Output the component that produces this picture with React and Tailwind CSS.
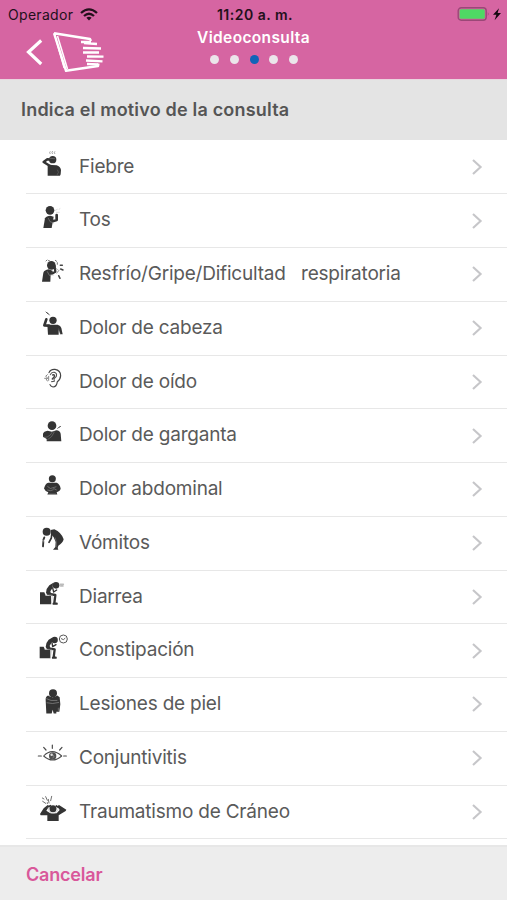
import React from "react";

const DARK = "#343434";

const line = (d, w = 6, color = DARK) => (
  <path d={d} fill="none" stroke={color} strokeWidth={w} strokeLinecap="round" strokeLinejoin="round" />
);

// Pictograms are drawn at three units per pixel; `top` is the row's first unit.
const rows = [
  {
    label: "Fiebre",
    top: 0,
    art: (
      <>
        {line("M90 41 q-3 -3 0 -6 M97 41 q-3 -4 0 -7 M104 41 q-3 -3 0 -6", 2.8, "#999")}
        <circle cx="98" cy="59" r="11" />
        {line("M99 59 L82 58 L71 66 L90 78", 7.5)}
        {line("M90 55 L104 56", 1.5, "#888")}
        <path d="M83 77 Q88 73 96 75 L110 76 Q121 79 123 90 L122 103 L120 107 H83 Z" />
        {line("M113 90 Q119 97 112 104", 1.5, "#777")}
      </>
    ),
  },
  {
    label: "Tos",
    top: 161,
    art: (
      <>
        <circle cx="90" cy="210" r="13" />
        <path d="M70 263 L75 234 Q79 226 91 226 L101 229 L95 263 Z" />
        {line("M88 239 L98 243 L110 239 L110 224", 8)}
        {line("M85 234 L90 244 L101 248", 1.5, "#999")}
        {line("M106 210 l6 -3 M109 216 h9 M117 207 l3 -2", 3, "#ddd")}
      </>
    ),
  },
  {
    label: "Resfrío/Gripe/Dificultad\u00a0\u00a0 respiratoria",
    top: 322,
    art: (
      <>
        <circle cx="94" cy="374" r="13" />
        <path d="M66 423 L70 396 Q73 388 86 386 L99 391 L92 401 L91 423 Z" />
        {line("M86 397 L95 399 L106 393 L104 377", 7)}
        {line("M82 393 L88 404 L101 403", 1.5, "#aaa")}
        {line("M78 361 l3 -3 M106 359 l4 3 M85 360 h3 M112 366 v5", 3, "#777")}
        {line("M108 383 l8 6 l-6 9 M118 389 l-6 6", 2, "#999")}
        {line("M121 374 h6 M122 385 l7 3 M116 405 l4 8", 4.5, "#444")}
      </>
    ),
  },
  {
    label: "Dolor de cabeza",
    top: 4,
    art: (
      <>
        {line("M78 37 l5 5 l-1 -3 l6 7", 2.6, "#444")}
        <circle cx="99" cy="62" r="11" />
        {line("M87 78 L73 77 L79 59", 8)}
        <path d="M82 75 H113 Q122 77 124 85 L128 104 H121 L116 91 V105 H84 Z" />
        {line("M116 88 L121 104", 1, "#999")}
      </>
    ),
  },
  {
    label: "Dolor de oído",
    top: 165,
    art: (
      <>
        {line("M87 218 Q91 207 105 208 Q122 211 122 227 Q121 239 112 245 Q110 261 99 261 Q92 260 90 254", 3.5, "#444")}
        {line("M91 224 Q94 216 103 217 Q112 220 109 229 L102 237 L103 244 L95 245", 3.3, "#555")}
        {line("M98 225 Q105 222 103 230 L97 237", 4.5, "#444")}
        {line("M74 235 h9 M82 224 l-5 5 l5 4 M79 238 l3 5 M86 229 v12", 2.7, "#777")}
      </>
    ),
  },
  {
    label: "Dolor de garganta",
    top: 326,
    art: (
      <>
        <circle cx="96" cy="376" r="13" />
        <path d="M69 400 Q71 393 83 391 L96 394 L109 390 Q120 391 122 400 L124 423 H80 V416 L69 409 Z" />
        {line("M72 411 Q82 413 91 404 L98 393 M83 418 Q97 411 103 395", 1.5, "#888")}
        {line("M113 384 l6 -5 M119 381 l3 -3", 3, "#666")}
      </>
    ),
  },
  {
    label: "Dolor abdominal",
    top: 7.5,
    art: (
      <>
        <circle cx="97" cy="55" r="10.5" />
        <path d="M85 67 H110 Q119 70 122 84 Q121 92 110 95 L112 102 H82 L85 95 Q74 91 72 84 Q76 69 85 67 Z" />
        {line("M83 78 L91 84 L108 79 M83 89 Q92 93 100 88 M101 84 l8 4", 1.7, "#999")}
        {line("M87 99 h20", 1, "#777")}
      </>
    ),
  },
  {
    label: "Vómitos",
    top: 169,
    art: (
      <>
        <circle cx="80" cy="216" r="12" />
        <path d="M92 211 L103 209 Q124 218 131 239 Q128 251 115 258 L113 265 L115 270 H99 L106 262 L107 247 L101 233 L93 223 Z" />
        {line("M96 217 L94 235 L87 248", 5)}
        {line("M106 235 Q112 251 109 262", 1.5, "#888")}
        {line("M73 233 L70 241 M70 246 L69 260", 5.5)}
        {line("M70 241 v6", 3, "#777")}
      </>
    ),
  },
  {
    label: "Diarrea",
    top: 330,
    art: (
      <>
        <path d="M60 397 H73 L77 407 H93 V433 H60 Z" />
        <circle cx="108" cy="376" r="10" />
        <path d="M99 369 L88 376 Q78 386 78 398 L82 405 H94 L91 394 L98 383 Z" />
        {line("M98 384 L101 396 L110 390", 4)}
        {line("M88 402 L106 405 L103 429 M101 431 H110", 7)}
        {line("M76 405 H97 L94 432", 1.5, "#999")}
        {line("M121 373 h9 M122 378 h7", 5, "#bbb")}
      </>
    ),
  },
  {
    label: "Constipación",
    top: 11,
    art: (
      <>
        <path d="M59 79 H71 L75 88 H91 V114 H59 Z" />
        <circle cx="104" cy="59" r="9.5" />
        <path d="M96 52 L86 58 Q77 67 77 80 L81 87 H92 L89 76 L96 65 Z" />
        {line("M96 67 L98 79 L108 73", 4)}
        {line("M86 84 L104 87 L101 111 M99 112 H107", 7)}
        {line("M74 87 H95 L91 113", 1.5, "#999")}
        <circle cx="130" cy="56" r="12" fill="none" stroke="#555" strokeWidth="3" />
        {line("M124 55 L130 58 L135 54", 2.8, "#555")}
      </>
    ),
  },
  {
    label: "Lesiones de piel",
    top: 172.5,
    art: (
      <>
        <circle cx="99" cy="218" r="12" />
        <path d="M84 225 Q76 228 77 239 L79 279 H95 L98 268 L101 279 H109 V274 H118 L121 251 L119 230 L112 225 Q98 235 84 225 Z" />
        {line("M80 235 Q91 243 111 240 M81 247 Q97 252 116 246", 1.8, "#999")}
        {line("M115 263 V270", 1.5, "#999")}
      </>
    ),
  },
  {
    label: "Conjuntivitis",
    top: 334,
    art: (
      <>
        {line("M71 409 Q96 383 125 409 Q98 433 71 409 Z", 3.2, "#4a4a4a")}
        <circle cx="98" cy="409" r="11" fill="#505050" />
        <circle cx="95" cy="405" r="3.8" fill="#ddd" />
        {line("M99 405 Q107 408 99 415", 2, "#999")}
        {line("M55 409 H64 M131 409 H139 M97 376 V386 M71 383 L78 391 M126 383 L119 391", 3.6, "#4a4a4a")}
      </>
    ),
  },
  {
    label: "Traumatismo de Cráneo",
    top: 45,
    art: (
      <>
        {line("M67 84 l5 3 M68 94 l9 6 M77 80 l5 11 M85 88 l2 11 M95 79 l-3 13 M82 98 v3", 2.8, "#666")}
        <path d="M83 105 L71 115 L60 132 L62 136 L82 136 V153 H116 V136 L137 123 L139 119 L117 105 L112 109 L119 120 L110 130 H91 L79 122 L88 108 Z" />
        <circle cx="99" cy="116" r="10.5" />
        {line("M85 112 Q84 130 101 130 Q113 128 115 114", 2.3, "#ccc")}
        {line("M91 107 L86 110 M109 108 L115 112", 5)}
      </>
    ),
  },
];

function StatusBar() {
  return (
    <div className="flex h-7 items-center text-[14px] text-[#23101b]">
      <div className="flex flex-1 items-center gap-[7px] pl-2">
        <span className="text-[14px] tracking-[0.3px]">Operador</span>
        <svg width="18" height="13" viewBox="0 0 18 13" fill="none" stroke="currentColor" strokeWidth="2.3">
          <path d="M1 5 Q9 -2.2 17 5" />
          <path d="M4 8 Q9 3.6 14 8" />
          <path d="M9 12.4 L6.4 9.8 Q9 7.8 11.6 9.8 Z" fill="currentColor" stroke="none" />
        </svg>
      </div>
      <span className="text-[14px] font-semibold tracking-[0.5px]">11:20 a. m.</span>
      <div className="flex flex-1 justify-end pr-[5px]">
        <svg width="45" height="15" viewBox="0 0 45 15">
          <rect x="1.2" y=".8" width="28" height="12.4" rx="3" fill="none" stroke="#9a4877" strokeWidth="1.4" />
          <rect x="2.6" y="2.2" width="25.2" height="9.6" rx="1.5" fill="#4fd964" />
          <path d="M30.8 5 q1.8 2 0 4 z" fill="#9a4877" />
          <path d="M42 1.2 L36 7.8 H39.4 L37.6 13.2 L44 6 H40.6 Z" fill="#140810" />
        </svg>
      </div>
    </div>
  );
}

function Header() {
  return (
    <header className="h-[79px] bg-[#d665a2]">
      <StatusBar />
      <div className="grid grid-cols-3">
        <svg width="110" height="50" viewBox="0 28 110 50" fill="none" stroke="#fff">
          <path d="M41.2 40.5 L28.5 52 L41.2 64" strokeWidth="3.2" />
          <path d="M54 33.2 L66 70.8 L98 66 L98.5 63.6 M54 33.2 L90 39 L91 41" strokeWidth="2.4" strokeLinejoin="round" />
          <path d="M57.5 36 L67.5 69" strokeWidth="1.5" />
          <path d="M55 36 L64 68" strokeWidth="1.2" />
          <path d="M81 42 H91 M84 43 L97 44 M83 48 L101 48.5 M83 52.5 H99 M87 56.5 L103.5 56.6 M86 60.5 L102.5 61.4 M87 64 L98 64.4" strokeWidth="2.3" />
        </svg>
        <div className="flex flex-col items-center">
          <h1 className="h-5 text-[15.5px] leading-5 font-semibold tracking-[0.35px] text-white">Videoconsulta</h1>
          <div className="mt-[7px] ml-px flex gap-[10.6px]">
            {[0, 1, 2, 3, 4].map((n) => (
              <span key={n} className={n === 2 ? "size-[9px] rounded-full bg-[#1064b8]" : "size-[9px] rounded-full bg-[#ebe5ea]"} />
            ))}
          </div>
        </div>
      </div>
    </header>
  );
}

export default function App() {
  return (
    <div className="flex h-[900px] w-[507px] flex-col overflow-hidden bg-white font-['Inter','Liberation_Sans',sans-serif]">
      <Header />
      <h2 className="h-[61px] shrink-0 border-t border-[#ead5df] bg-[#e4e4e4] pl-[21px] text-[18px] leading-[60px] font-semibold tracking-[0.19px] text-[#555]">
        Indica el motivo de la consulta
      </h2>
      <ul className="h-[705px] shrink-0 overflow-hidden pt-[0.6px]">
        {rows.map((row) => (
          <li key={row.label} className="ml-[26px] flex h-[53.75px] items-center border-b border-[#e7e7e7]">
            <svg className="ml-1.5 shrink-0" width="40" height="53.67" viewBox={`36 ${row.top} 120 161`} fill={DARK}>
              {row.art}
            </svg>
            <span className="ml-[7px] flex-1 text-[19px] tracking-[-0.21px] whitespace-nowrap text-[#5a5a5a]">{row.label}</span>
            <svg className="mr-[23px]" width="13" height="18" viewBox="0 0 13 18" fill="none" stroke="#c6c6c9" strokeWidth="2.1">
              <path d="M2 2 L9.6 9 L2 16" />
            </svg>
          </li>
        ))}
      </ul>
      <footer className="h-[55px] shrink-0 border-t-2 border-[#e7e7e7] bg-[#ededed] pl-[26px]">
        <button className="h-[54px] text-[18px] font-semibold tracking-[-0.2px] text-[#d9589a]">Cancelar</button>
      </footer>
    </div>
  );
}
